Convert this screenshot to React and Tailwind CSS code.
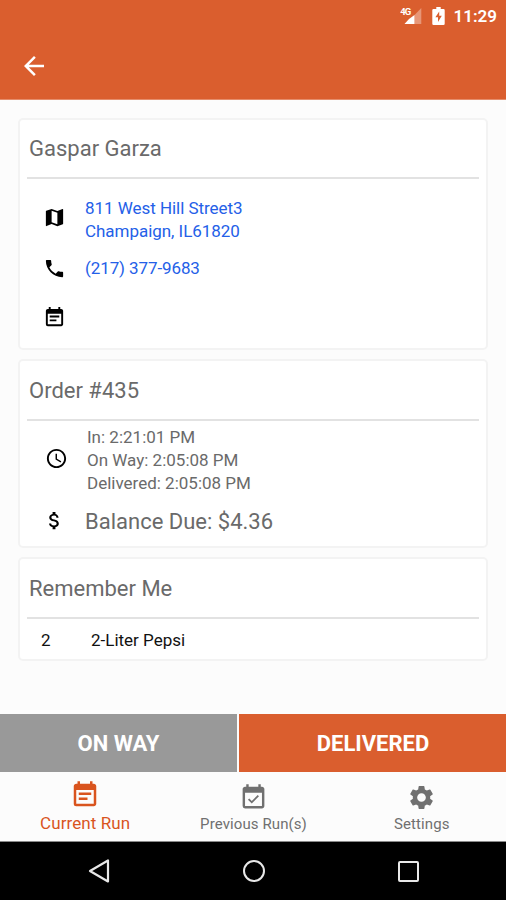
import {
  MdAccessTime,
  MdArrowBack,
  MdAttachMoney,
  MdEventAvailable,
  MdEventNote,
  MdMap,
  MdPhone,
  MdSettings,
} from "react-icons/md";

const tabs = [
  { label: "Current Run", icon: MdEventNote, active: true },
  { label: "Previous Run(s)", icon: MdEventAvailable },
  { label: "Settings", icon: MdSettings },
];

function StatusBar() {
  return (
    <div className="flex h-8 items-center justify-end pr-[9px] text-white">
      <svg viewBox="0 0 22 18" className="mr-[10px] h-[18px] w-[22px]">
        <path d="M21.3 1 L21.3 17 L14.5 17 L14.5 8 Z" fill="#fff" fillOpacity="0.35" />
        <path d="M14.5 8 L14.5 17 L4.5 17 L9 12 Z" fill="#fff" />
        <text x="0.3" y="8" fontSize="9.5" fontWeight="700" fontFamily="Roboto" fill="#fff" textLength="11">
          4G
        </text>
      </svg>
      <svg viewBox="0 0 13 18" className="mr-[9px] h-[18px] w-[13px]">
        <path d="M1.5 2h2.8V0h4.4v2h2.8q1.2 0 1.2 1.2v13.6q0 1.2-1.2 1.2h-10q-1.2 0-1.2-1.2V3.2q0-1.2 1.2-1.2z" fill="#fff" />
        <path d="M7.2 4.4 L3.4 10.2 H6 V15 L9.8 8.8 H7.2 Z" fill="#da5e2e" />
      </svg>
      <span className="text-[17px] font-semibold leading-none">11:29</span>
    </div>
  );
}

function Card({ title, className, titleClassName = "h-[60px] pt-px", children }) {
  return (
    <section className={`rounded-[5px] border-2 border-[#f3f3f3] bg-white px-[7px] ${className}`}>
      <h2 className={`flex items-center border-b-2 border-[#e2e2e2] pl-[2px] text-[22px] text-[#6a6a6a] ${titleClassName}`}>
        {title}
      </h2>
      {children}
    </section>
  );
}

function Row({ icon: Icon, className, iconClassName = "", children }) {
  return (
    <div className={`flex items-center ${className}`}>
      <Icon className={`ml-4 mr-[19px] size-[23px] shrink-0 text-black ${iconClassName}`} />
      {children}
    </div>
  );
}

function AndroidNav() {
  return (
    <div className="grid h-[58px] grid-cols-[197px_113px_196px] items-center justify-items-center bg-black">
      <svg viewBox="0 0 24 26" className="h-[26px] w-6" fill="none" stroke="#e8e8e8" strokeWidth="2.2">
        <path d="M21 2.5 V23.5 L3 13 Z" strokeLinejoin="round" />
      </svg>
      <div className="size-[22px] rounded-full border-2 border-[#e8e8e8]" />
      <div className="size-[21px] rounded-[2px] border-2 border-[#e8e8e8]" />
    </div>
  );
}

export default function App() {
  return (
    <div className="flex h-[900px] w-[506px] flex-col overflow-hidden bg-[#fcfcfc] font-['Roboto',sans-serif]">
      <header className="h-[100px] shrink-0 border-b border-[#e58d6b] bg-[#da5e2e]">
        <StatusBar />
        <button className="ml-[19px] mt-[19px] block text-white" aria-label="Back">
          <MdArrowBack className="size-[30px]" />
        </button>
      </header>

      <main className="flex flex-1 flex-col px-[18px] pt-[18px]">
        <Card title="Gaspar Garza" className="h-[232px]" titleClassName="h-[59px]">
          <div className="pt-[18px] text-[17px] tracking-[-0.04px] text-[#2460e8]">
            <Row icon={MdMap} className="h-[46px] leading-[23px]" iconClassName="mb-[5px]">
              <p>
                811 West Hill Street3
                <br />
                Champaign, IL61820
              </p>
            </Row>
            <Row icon={MdPhone} className="mt-[14px] h-[23px]">
              <span className="tracking-[-0.1px]">(217) 377-9683</span>
            </Row>
            <Row icon={MdEventNote} className="mt-[26px] h-[23px]" />
          </div>
        </Card>

        <Card title="Order #435" className="mt-[9px] h-[189px]">
          <div className="pt-[5px] text-[#6a6a6a]">
            <div className="flex items-center text-[17px] leading-[23px]">
              <MdAccessTime className="mb-[5px] ml-[18px] mr-[19px] size-[23px] shrink-0 text-black" />
              <div>
                <p>In: 2:21:01 PM</p>
                <p>On Way: 2:05:08 PM</p>
                <p>Delivered: 2:05:08 PM</p>
              </div>
            </div>
            <Row icon={MdAttachMoney} className="mt-[13px] h-[27px] text-[22px]" iconClassName="mb-[3px]">
              <span>Balance Due: $4.36</span>
            </Row>
          </div>
        </Card>

        <Card title="Remember Me" className="mt-[9px] h-[104px]">
          <div className="flex h-[43px] items-center pl-[14px] text-[17px] text-[#111]">
            <span className="w-[50px]">2</span>
            <span>2-Liter Pepsi</span>
          </div>
        </Card>
      </main>

      <div className="flex h-[58px] shrink-0 gap-[2px] text-[22px] font-bold text-white">
        <button className="w-[237px] bg-[#999]">ON WAY</button>
        <button className="flex-1 bg-[#da5e2e] pl-px">DELIVERED</button>
      </div>

      <nav className="grid h-[70px] shrink-0 grid-cols-3 border-b border-[#8a8a8a] pl-px">
        {tabs.map(({ label, icon: Icon, active }) => (
          <button
            key={label}
            className={`flex flex-col items-center ${
              active ? "pt-2 text-[17px] text-[#d9541e]" : "pt-[11px] text-[15px] text-[#707070]"
            }`}
          >
            <Icon className={active ? "size-[30px]" : "size-[29px]"} />
            <span className={active ? "mt-px leading-6 tracking-[0.1px]" : "mt-[2px] leading-5 tracking-[0.1px]"}>
              {label}
            </span>
          </button>
        ))}
      </nav>

      <AndroidNav />
    </div>
  );
}
